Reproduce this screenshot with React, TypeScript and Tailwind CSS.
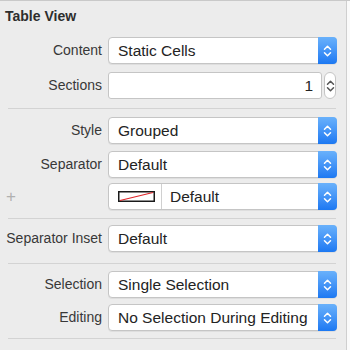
import type { ReactNode } from 'react'

function Chevrons({ color = '#ffffff' }: { color?: string }) {
  return (
    <svg width="9" height="14" viewBox="0 0 9 14" fill="none">
      <path d="M1.5 5.2 L4.5 2.2 L7.5 5.2" stroke={color} strokeWidth="1.5" strokeLinecap="round" strokeLinejoin="round" />
      <path d="M1.5 8.8 L4.5 11.8 L7.5 8.8" stroke={color} strokeWidth="1.5" strokeLinecap="round" strokeLinejoin="round" />
    </svg>
  )
}

function BlueButton() {
  return (
    <div className="flex w-[19px] shrink-0 items-center justify-center rounded-r-[4px] bg-gradient-to-b from-[#69b1fb] to-[#1b78f2] -my-px -mr-px">
      <Chevrons />
    </div>
  )
}

function Popup({ value }: { value: string }) {
  return (
    <div className="flex h-[27px] w-[229px] rounded-[4px] border border-[#c5c5c5] bg-white shadow-[0_1px_0_rgba(0,0,0,0.06)]">
      <div className="flex flex-1 items-center pl-[9px] text-[15.5px] text-[#232323]">{value}</div>
      <BlueButton />
    </div>
  )
}

function Row({ label, children, className = '' }: { label?: ReactNode; children: ReactNode; className?: string }) {
  return (
    <div className={`flex items-center ${className}`}>
      <div className="w-[102px] shrink-0 text-right text-[14px] text-[#383838]">{label}</div>
      <div className="ml-[6px] flex items-center">{children}</div>
    </div>
  )
}

function Divider({ className = '' }: { className?: string }) {
  return <div className={`ml-[8px] h-px w-[328px] bg-[#d3d3d3] ${className}`} />
}

export default function App() {
  return (
    <div className="h-[350px] w-[350px] overflow-hidden border-t border-[#c9c9c9] bg-[#fafafa] font-['Liberation_Sans',Arial,sans-serif]">
      <div className="h-[349px] w-[347px] border-r border-[#cfcfcf] bg-[#ececec]">
        <div className="h-[36px] pl-[5px] pt-[6px] text-[14px] font-bold leading-[18px] text-[#2e2e2e]">
          Table View
        </div>

        <Row label="Content">
          <Popup value="Static Cells" />
        </Row>
        <Row label="Sections" className="mt-[8px]">
          <div className="flex h-[27px] w-[214px] items-center justify-end rounded-[3px] border border-[#c5c5c5] bg-white pr-[8px] text-[15.5px] text-[#232323]">
            1
          </div>
          <div className="ml-[2px] flex h-[27px] w-[12px] items-center justify-center rounded-full border border-[#c5c5c5] bg-white">
            <Chevrons color="#555555" />
          </div>
        </Row>

        <Divider className="mt-[9px]" />

        <Row label="Style" className="mt-[8px]">
          <Popup value="Grouped" />
        </Row>
        <Row label="Separator" className="mt-[7px]">
          <Popup value="Default" />
        </Row>
        <div className="mt-[5px] flex items-center">
          <div className="w-[102px] shrink-0 pl-[6px] text-[17px] font-light leading-none text-[#b0b0b0]">+</div>
          <div className="ml-[6px] flex h-[27px] w-[229px] rounded-[4px] border border-[#c5c5c5] bg-white shadow-[0_1px_0_rgba(0,0,0,0.06)]">
            <div className="flex w-[53px] items-center border-r border-[#d0d0d0] pl-[9px]">
              <svg width="37" height="11" viewBox="0 0 37 11">
                <rect x="0.75" y="0.75" width="35.5" height="9.5" fill="#ffffff" stroke="#1a1a1a" strokeWidth="1.5" />
                <line x1="2" y1="9.5" x2="35" y2="1.5" stroke="#e0262a" strokeWidth="1.2" />
              </svg>
            </div>
            <div className="flex flex-1 items-center pl-[8px] text-[15.5px] text-[#232323]">Default</div>
            <BlueButton />
          </div>
        </div>

        <Divider className="mt-[8px]" />

        <Row label="Separator Inset" className="mt-[6px]">
          <Popup value="Default" />
        </Row>

        <Divider className="mt-[11px]" />

        <Row label="Selection" className="mt-[7px]">
          <Popup value="Single Selection" />
        </Row>
        <Row label="Editing" className="mt-[6px]">
          <Popup value="No Selection During Editing" />
        </Row>

        <Divider className="mt-[7px]" />
      </div>
    </div>
  )
}
